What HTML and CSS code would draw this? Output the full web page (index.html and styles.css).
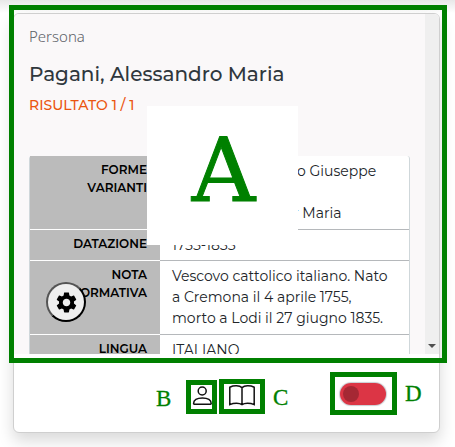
FILE: index.html
```html
<!DOCTYPE html>
<html lang="it">
<head>
<meta charset="utf-8">
<title>Persona</title>
<link rel="stylesheet" href="styles.css">
</head>
<body>
<main class="card">
  <section class="panel">
    <div class="content">
      <p class="kind">Persona</p>
      <h1 class="name">Pagani, Alessandro Maria</h1>
      <p class="result">RISULTATO 1 / 1</p>
      <dl class="details">
        <dt>FORME<br>VARIANTI</dt>
        <dd class="variants">o Giuseppe<br><br><span class="second">r Maria</span></dd>
        <dt class="single">DATAZIONE</dt>
        <dd class="single">1755-1835</dd>
        <dt>NOTA<br>NORMATIVA</dt>
        <dd>Vescovo cattolico italiano. Nato<br>a Cremona il 4 aprile 1755,<br>morto a Lodi il 27 giugno 1835.</dd>
        <dt class="single">LINGUA</dt>
        <dd class="single">ITALIANO</dd>
      </dl>
    </div>
    <div class="scrollbar"><i></i></div>
  </section>
  <footer class="actions">
    <span class="letter b">B</span>
    <span class="box person"><svg width="20" height="20" viewBox="0 0 20 20"><circle cx="10.200" cy="5" r="4"/><path d="M1.600 17.800c-.2-4 3.400-5.800 8.800-5.800s9 1.800 8.800 5.800q0 .4-.6.400H2.200q-.6 0-.6-.4z"/></svg></span>
    <span class="box book"><svg width="28" height="23" viewBox="0 0 28 23"><path d="M14 3.600C11.500 1.400 6 1.200 1.800 3.200V20.600C6 18.700 11.500 18.800 14 20.600C16.500 18.800 22 18.700 26.200 20.600V3.200C22 1.200 16.500 1.400 14 3.600V20.600"/></svg></span>
    <span class="letter c">C</span>
    <span class="box switch"><span class="track"><i></i></span></span>
    <span class="letter d">D</span>
  </footer>
</main>
<button class="gear" aria-label="Impostazioni"><svg width="25" height="25" viewBox="0 0 24 24"><path d="M19.140 12.940c.04-.3.060-.61.060-.94 0-.32-.02-.64-.07-.94l2.030-1.580c.18-.14.230-.41.120-.61l-1.920-3.320c-.12-.22-.37-.29-.59-.22l-2.390.96c-.5-.38-1.030-.7-1.620-.94l-.36-2.540c-.04-.24-.24-.41-.48-.41h-3.840c-.24 0-.43.170-.47.410l-.36 2.540c-.59.240-1.130.570-1.620.940l-2.390-.96c-.22-.08-.47 0-.59.220L2.740 8.870c-.12.210-.08.470.120.610l2.030 1.580c-.05.300-.09.630-.09.940s.02.640.070.940l-2.030 1.580c-.18.140-.23.410-.12.610l1.920 3.320c.12.220.37.290.59.220l2.390-.96c.5.380 1.030.700 1.620.940l.36 2.540c.05.240.240.410.480.410h3.840c.24 0 .44-.17.470-.41l.36-2.540c.59-.24 1.130-.56 1.620-.94l2.390.960c.22.080.470 0 .59-.22l1.920-3.320c.12-.22.070-.47-.12-.61l-2.010-1.580zM12 15.600c-1.980 0-3.600-1.620-3.600-3.600s1.620-3.600 3.600-3.600 3.600 1.620 3.600 3.600-1.620 3.600-3.600 3.600z"/></svg></button>
<div class="highlight"></div>
<div class="label-a">A</div>
</body>
</html>
```
FILE: styles.css
```css
* { box-sizing: border-box; }
body {
  margin: 0;
  height: 447px;
  padding: 13px 15px 0 13px;
  overflow: hidden;
  background: linear-gradient(#e8e8e8, #fff 13px);
  font-family: Montserrat, "Open Sans", sans-serif;
  color: #212529;
}
p, h1, dl, dd { margin: 0; }
.card {
  width: 427px;
  height: 420px;
  border: 1px solid #cfcfcf;
  border-radius: 6px;
  background: #fff;
  box-shadow: 0 8px 16px rgba(0, 0, 0, .15);
}
.panel {
  display: flex;
  height: 340px;
  overflow: hidden;
  border-radius: 5px 5px 0 0;
  background: #faf8f9;
}
.content { flex: 1; padding: 10px 15px 0; }
.scrollbar {
  width: 15px;
  display: flex;
  align-items: flex-end;
  justify-content: center;
  padding-bottom: 6px;
  background: #efefef;
}
.scrollbar i {
  border: 4px solid transparent;
  border-top-color: #505050;
  border-bottom: 0;
}
.kind { font: 300 15px/24px "Noto Sans", "Open Sans", sans-serif; color: #5b6066; }
.name { margin-top: 11px; font-size: 20px; font-weight: 500; line-height: 30px; white-space: nowrap; color: #2f373d; }
.result { margin-top: 6px; font-size: 14px; font-weight: 500; line-height: 20px; color: #eb5510; }
.details {
  display: grid;
  grid-template-columns: 130px 1fr;
  width: 381px;
  margin-top: 41px;
  border: 1px solid #cfd7da;
  border-top: 0;
  border-radius: 3px;
  background: #fff;
}
dt {
  padding: 5px 13px 8px 0;
  border-bottom: 1px solid #fff;
  background: #bbb;
  color: #000;
  font-size: 12px;
  font-weight: 600;
  line-height: 18px;
  text-align: right;
}
dd {
  padding: 5px 0 5px 12px;
  border-bottom: 1px solid #b5b8bb;
  font-size: 14px;
  line-height: 21px;
  white-space: nowrap;
}
dt.single { padding-bottom: 7px; }
dd.single { padding-bottom: 4px; }
.variants { padding-left: 137px; }
.second { margin-left: -4px; }
.actions { display: flex; height: 78px; align-items: flex-start; }
.letter { font: 23px/30px "Liberation Serif", serif; color: green; -webkit-text-stroke: .3px green; }
.b { margin: 30px 0 0 142px; width: 30px; }
.c { margin: 29px 0 0 8px; width: 49px; }
.d { margin: 25px 0 0 8px; }
.box { display: flex; align-items: center; justify-content: center; border: 5px solid green; }
.box svg { flex: none; fill: none; stroke: #111; stroke-width: 1.5; }
.person { width: 31px; height: 34px; margin-top: 26px; padding-bottom: 2px; }
.book { width: 46px; height: 35px; margin: 25px 0 0 2px; padding-bottom: 3px; }
.switch { width: 67px; height: 43px; margin: 18px 0 0 8px; padding-right: 2px; }
.track { width: 46px; height: 22px; padding: 3px; border-radius: 11px; background: #dc3545; box-shadow: 0 0 1px 1px #c9cdd2; }
.track i { display: block; width: 16px; height: 16px; border-radius: 50%; background: #a52834; }
.gear {
  position: absolute;
  left: 46px;
  top: 282px;
  width: 40px;
  height: 40px;
  padding: 0;
  display: flex;
  align-items: center;
  justify-content: center;
  border: 2px outset #000;
  border-radius: 50%;
  background: #efefef;
}
.highlight { position: absolute; left: 9px; top: 5px; width: 438px; height: 358px; border: 5px solid green; }
.label-a {
  position: absolute;
  left: 147px;
  top: 106px;
  width: 151px;
  height: 139px;
  padding-left: 2px;
  background: #fff;
  color: green;
  font: 88px/129px "DejaVu Serif", serif;
  -webkit-text-stroke: 1px green;
  text-align: center;
}
```
